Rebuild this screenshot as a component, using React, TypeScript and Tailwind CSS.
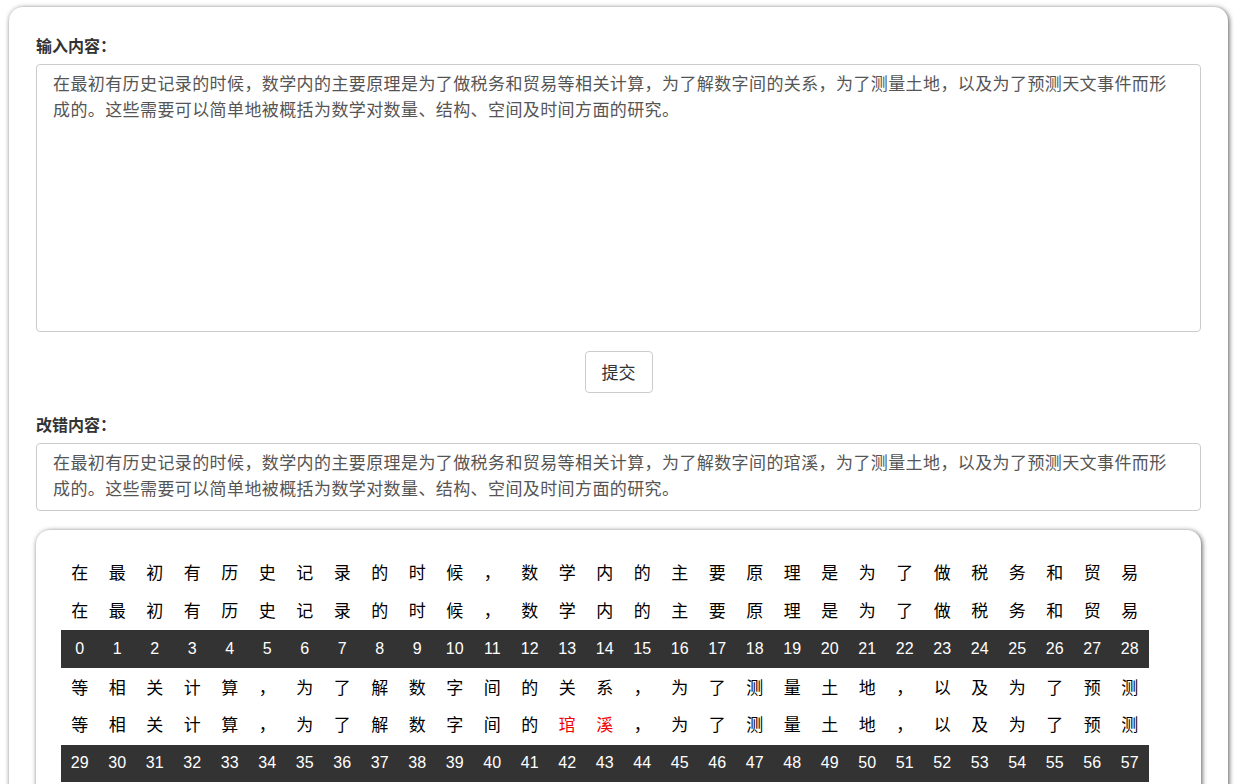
const original =
  '在最初有历史记录的时候，数学内的主要原理是为了做税务和贸易等相关计算，为了解数字间的关系，为了测量土地，以及为了预测天文事件而形成的。这些需要可以简单地被概括为数学对数量、结构、空间及时间方面的研究。'
const corrected =
  '在最初有历史记录的时候，数学内的主要原理是为了做税务和贸易等相关计算，为了解数字间的琯溪，为了测量土地，以及为了预测天文事件而形成的。这些需要可以简单地被概括为数学对数量、结构、空间及时间方面的研究。'

const PER_ROW = 29

function chunk(s: string) {
  const chars = Array.from(s)
  const rows: string[][] = []
  for (let i = 0; i < chars.length; i += PER_ROW) rows.push(chars.slice(i, i + PER_ROW))
  return rows
}

export default function App() {
  const a = chunk(original)
  const b = chunk(corrected)

  return (
    <div className="min-h-screen bg-white pl-[9px] pr-[15px] pt-[7px] pb-6 font-['Noto_Sans_CJK_SC','Liberation_Sans',sans-serif] text-[#333]">
      <div className="rounded-[14px] bg-white px-[27px] pt-[27px] pb-[26px] shadow-[1px_1px_5px_#555]">
        <div className="mb-[8px] text-[16px] font-bold leading-[22px]">输入内容：</div>
        <textarea
          defaultValue={original}
          className="block h-[268px] w-full resize-none rounded-[4px] border border-[#ccc] pl-[16px] pr-[19px] pt-[5px] font-['Noto_Sans_CJK_SC','Liberation_Sans',sans-serif] text-[17px] leading-[26px] tracking-[0.4px] text-[#555] outline-none"
        />
        <div className="mt-[19px] flex justify-center">
          <button className="h-[42px] rounded-[4px] border border-[#ccc] bg-white px-[16px] text-[17px] text-[#333]">
            提交
          </button>
        </div>
        <div className="mt-[20px] mb-[8px] text-[16px] font-bold leading-[22px]">改错内容：</div>
        <div className="rounded-[4px] border border-[#ccc] pl-[16px] pr-[19px] pt-[5px] pb-[9px] text-[17px] leading-[26px] tracking-[0.4px] text-[#555]">
          {corrected}
        </div>
        <div className="mt-[19px] rounded-[14px] bg-white px-[25px] pt-[23px] pb-[25px] shadow-[1px_1px_5px_#555]">
          {a.map((row, r) => (
            <div key={r}>
              <div className="flex">
                {row.map((c, i) => (
                  <div key={i} className="flex h-[37.5px] w-[37.5px] items-center justify-center text-[17px] text-black">
                    {c}
                  </div>
                ))}
              </div>
              <div className="flex">
                {b[r].map((c, i) => (
                  <div
                    key={i}
                    className={
                      c !== row[i]
                        ? 'flex h-[37.5px] w-[37.5px] items-center justify-center text-[17px] text-[#e00]'
                        : 'flex h-[37.5px] w-[37.5px] items-center justify-center text-[17px] text-black'
                    }
                  >
                    {c}
                  </div>
                ))}
              </div>
              <div className="mt-[2px] flex w-fit bg-[#333]">
                {row.map((_, i) => (
                  <div
                    key={i}
                    className="flex h-[37.5px] w-[37.5px] items-center justify-center font-['Liberation_Sans',sans-serif] text-[16px] text-white"
                  >
                    {r * PER_ROW + i}
                  </div>
                ))}
              </div>
            </div>
          ))}
        </div>
      </div>
    </div>
  )
}
